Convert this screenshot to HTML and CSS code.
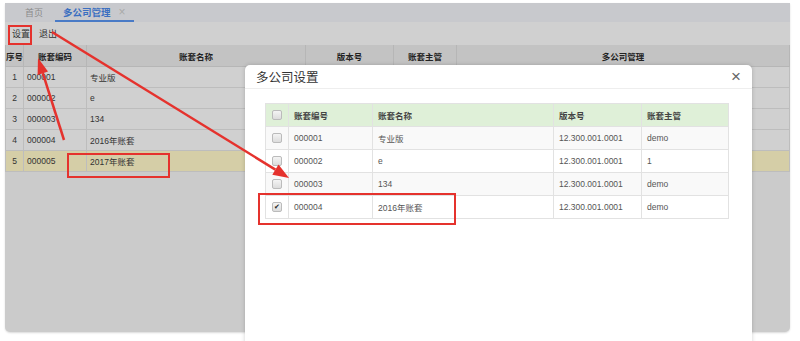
FILE: index.html
```html
<!DOCTYPE html>
<html lang="zh-CN">
<head>
    <meta charset="UTF-8">
    <title>多公司管理</title>
    <link rel="stylesheet" href="styles.css">
</head>
<body>
    <div class="screen">
        <!-- 标签栏 -->
        <div class="tabs">
            <span class="tab">首页</span>
            <span class="tab active">多公司管理<i class="tab-close">×</i></span>
        </div>
        <!-- 工具栏 -->
        <div class="toolbar">
            <a href="javascript:;">设置</a>
            <a href="javascript:;">退出</a>
        </div>
        <!-- 账套列表 -->
        <table class="grid">
            <colgroup>
                <col class="c-no"><col class="c-code"><col class="c-name"><col class="c-ver"><col class="c-boss"><col>
            </colgroup>
            <thead>
                <tr><th>序号</th><th>账套编码</th><th>账套名称</th><th>版本号</th><th>账套主管</th><th>多公司管理</th></tr>
            </thead>
            <tbody>
                <tr><td class="num">1</td><td>000001</td><td>专业版</td><td></td><td></td><td></td></tr>
                <tr><td class="num">2</td><td>000002</td><td>e</td><td></td><td></td><td></td></tr>
                <tr><td class="num">3</td><td>000003</td><td>134</td><td></td><td></td><td></td></tr>
                <tr><td class="num">4</td><td>000004</td><td>2016年账套</td><td></td><td></td><td></td></tr>
                <tr class="current"><td class="num">5</td><td>000005</td><td>2017年账套</td><td></td><td></td><td></td></tr>
            </tbody>
        </table>
    </div>

    <!-- 弹窗 -->
    <div class="dialog">
        <div class="dialog-head">
            <span class="dialog-title">多公司设置</span>
            <span class="dialog-close">×</span>
        </div>
        <div class="dialog-body">
            <table class="list">
                <colgroup>
                    <col class="l-chk"><col class="l-code"><col class="l-name"><col class="l-ver"><col>
                </colgroup>
                <thead>
                    <tr><th><span class="chk"></span></th><th>账套编号</th><th>账套名称</th><th>版本号</th><th>账套主管</th></tr>
                </thead>
                <tbody>
                    <tr><td><span class="chk"></span></td><td>000001</td><td>专业版</td><td>12.300.001.0001</td><td>demo</td></tr>
                    <tr><td><span class="chk"></span></td><td>000002</td><td>e</td><td>12.300.001.0001</td><td>1</td></tr>
                    <tr><td><span class="chk"></span></td><td>000003</td><td>134</td><td>12.300.001.0001</td><td>demo</td></tr>
                    <tr><td><span class="chk on">✔</span></td><td>000004</td><td>2016年账套</td><td>12.300.001.0001</td><td>demo</td></tr>
                </tbody>
            </table>
        </div>
    </div>

    <!-- 标注 -->
    <div class="mark mark-set"></div>
    <div class="mark mark-2017"></div>
    <div class="mark mark-pick"></div>
    <svg class="arrows" width="800" height="341" viewBox="0 0 800 341">
        <line x1="64" y1="140" x2="42.8" y2="73.2"/>
        <polygon points="38,58 48,71.5 37.6,74.9"/>
        <line x1="52" y1="32" x2="275.4" y2="169.6"/>
        <polygon points="289,178 272.3,174.7 278.5,164.5"/>
    </svg>
</body>
</html>
```

FILE: styles.css
```css
*{
    margin: 0;
    padding: 0;
}
body{
    width: 800px;
    height: 341px;
    background: #fff;
    font-family: "Liberation Sans", "Noto Sans CJK SC", sans-serif;
    font-size: 8.5px;
    color: #333;
    position: relative;
    overflow: hidden;
}
.screen{
    margin: 3px 10px 0 5px;
    height: 329px;
    background: #cbcbcb;
    border-radius: 0 0 5px 5px;
    box-shadow: 0 1px 2px rgba(0,0,0,.15);
    overflow: hidden;
}

/* 标签栏 */
.tabs{
    height: 19px;
    background: #c8c9cd;
    display: flex;
    align-items: stretch;
    padding-left: 15px;
    gap: 7px;
}
.tab{
    display: flex;
    align-items: center;
    padding: 0 5px;
    font-size: 9px;
    color: #8a8a8a;
}
.tab.active{
    padding: 0 8px 0 8px;
    font-size: 9.5px;
    font-weight: bold;
    color: #3b6fc1;
    border-bottom: 2px solid #4a7bc6;
}
.tab-close{
    font-style: normal;
    font-weight: normal;
    color: #a9a9a9;
    margin-left: 8px;
    font-size: 12px;
}

/* 工具栏 */
.toolbar{
    height: 23px;
    background: #d0d0d0;
    display: flex;
    align-items: center;
    padding-left: 7px;
    gap: 9px;
}
.toolbar a{
    color: #333;
    text-decoration: none;
    font-size: 9px;
}

/* 账套列表 */
.grid{
    width: 100%;
    border-collapse: collapse;
    table-layout: fixed;
}
.grid .c-no{width: 18px;}
.grid .c-code{width: 63px;}
.grid .c-name{width: 219px;}
.grid .c-ver{width: 88px;}
.grid .c-boss{width: 63px;}
.grid th{
    height: 21px;
    background: #c3c3c3;
    border: 1px solid #b6b6b6;
    border-top: 0;
    font-weight: bold;
    color: #222;
    white-space: nowrap;
}
.grid td{
    height: 20px;
    background: #d0d0d0;
    border: 1px solid #bdbdbd;
    padding-left: 3px;
    white-space: nowrap;
}
.grid td.num{
    padding-left: 0;
    text-align: center;
}
.grid tr.current td{
    background: #d5cea7;
}

/* 弹窗 */
.dialog{
    position: absolute;
    left: 245px;
    top: 65px;
    width: 507px;
    height: 280px;
    background: #fff;
    border-radius: 5px 5px 0 0;
    box-shadow: 0 0 4px rgba(0,0,0,.18);
}
.dialog-head{
    height: 23px;
    border-bottom: 1px solid #eee;
    display: flex;
    align-items: center;
    justify-content: space-between;
    padding: 0 11px 0 11px;
}
.dialog-title{
    font-size: 12.5px;
    color: #333;
}
.dialog-close{
    font-size: 17px;
    font-weight: 300;
    color: #666;
}
.dialog-body{
    padding: 14px 23px 0 20px;
}
.list{
    width: 100%;
    border-collapse: collapse;
    table-layout: fixed;
    color: #555;
}
.list .l-chk{width: 23px;}
.list .l-code{width: 84px;}
.list .l-name{width: 181px;}
.list .l-ver{width: 88px;}
.list th,
.list td{
    height: 22px;
    border: 1px solid #e2e2e2;
    padding-left: 5px;
    text-align: left;
    white-space: nowrap;
}
.list th{
    background: #dff0d8;
    font-weight: bold;
    color: #444;
}
.list tbody tr:nth-child(odd) td{
    background: #f9f9f9;
}
.list th:first-child,
.list td:first-child{
    padding-left: 0;
    text-align: center;
}
.chk{
    display: inline-block;
    width: 8px;
    height: 8px;
    border: 1px solid #bbb;
    border-radius: 2px;
    background: linear-gradient(#f4f4f4, #dcdcdc);
    vertical-align: middle;
    font-size: 7px;
    line-height: 8px;
    color: #222;
    text-align: center;
}

/* 红色标注 */
.mark{
    position: absolute;
    border: 2px solid #e5322d;
}
.mark-set{left: 8px; top: 25px; width: 20px; height: 16px;}
.mark-2017{left: 67px; top: 153px; width: 99px; height: 21px;}
.mark-pick{left: 258px; top: 193px; width: 194px; height: 28px;}
.arrows{
    position: absolute;
    left: 0;
    top: 0;
    pointer-events: none;
}
.arrows line{
    stroke: #e5322d;
    stroke-width: 2.5;
}
.arrows polygon{
    fill: #e5322d;
}
```
